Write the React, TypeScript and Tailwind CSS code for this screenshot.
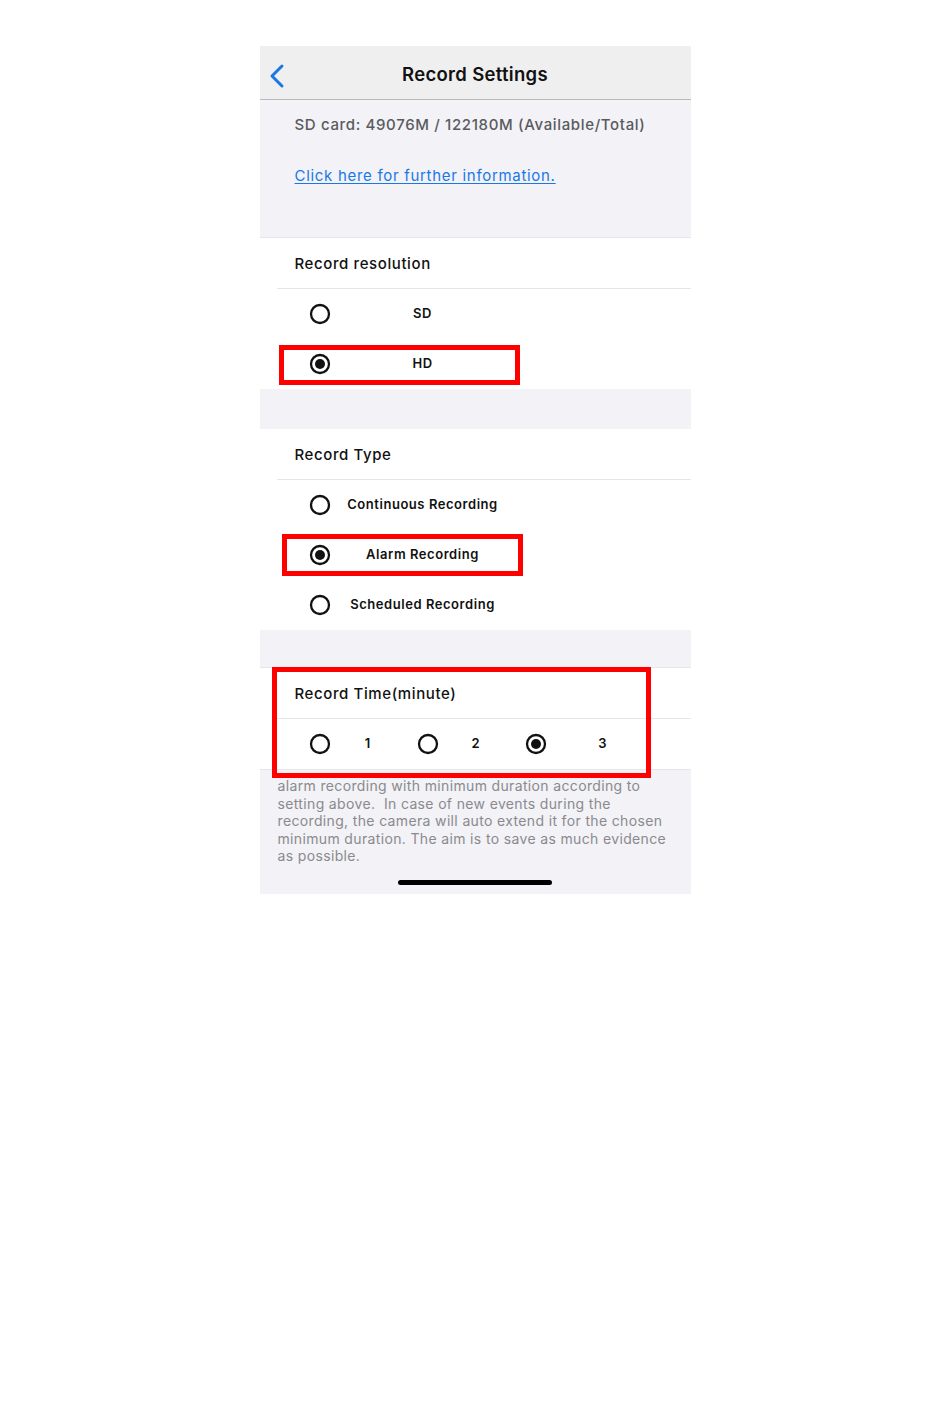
import React from "react";

function Radio({ on }: { on?: boolean }) {
  return (
    <svg width="22" height="22" viewBox="0 0 22 22" className="shrink-0">
      <circle cx="11" cy="11" r="9" fill="none" stroke="#111" strokeWidth="2.3" />
      {on && <circle cx="11" cy="11" r="5" fill="#111" />}
    </svg>
  );
}

function OptionRow({ label, on }: { label: string; on?: boolean }) {
  return (
    <div className="h-[50px] flex items-center">
      <div className="ml-[49px]">
        <Radio on={on} />
      </div>
      <div className="w-[184px] text-center text-[13px] font-semibold text-[#111] tracking-[0.55px]">
        {label}
      </div>
    </div>
  );
}

function Header({ title }: { title: string }) {
  return (
    <div className="h-[50px] flex items-center pt-[2px]">
      <span className="pl-[35px] text-[15px] font-medium text-[#111] tracking-[0.6px]">{title}</span>
    </div>
  );
}

export default function App() {
  return (
    <div className="min-h-[1420px] bg-white" style={{ fontFamily: "Inter, 'Noto Sans', sans-serif" }}>
      <div className="pt-[46px]">
        <div className="relative mx-auto w-[431px] bg-[#f2f2f7]">
          {/* Nav bar */}
          <div className="relative h-[54px] bg-[#efeff0] border-b border-[#b9b9bc] flex items-center justify-center pt-[5px]">
            <svg
              className="absolute left-[9px] top-[17px]"
              width="18"
              height="26"
              viewBox="0 0 18 26"
            >
              <path d="M13 3 L3 13 L13 23" fill="none" stroke="#1a78e6" strokeWidth="3" strokeLinecap="round" strokeLinejoin="round" />
            </svg>
            <span className="text-[18.5px] font-semibold text-[#111] tracking-[0.3px]">Record Settings</span>
          </div>

          {/* Info */}
          <div className="h-[138px] pl-[35px] pt-[15px] border-b border-[#e6e6ea]">
            <div className="text-[15px] leading-[20px] font-medium text-[#5a5a5e] tracking-[0.65px]">
              SD card: 49076M / 122180M (Available/Total)
            </div>
            <div className="mt-[31px] text-[15px] leading-[20px] text-[#1a78e6] underline underline-offset-2 tracking-[0.7px]">
              Click here for further information.
            </div>
          </div>

          {/* Record resolution */}
          <div className="bg-white">
            <Header title="Record resolution" />
            <div className="ml-[17px] border-t border-[#e6e6ea]" />
            <OptionRow label="SD" />
            <OptionRow label="HD" on />
          </div>

          <div className="h-[40px]" />

          {/* Record Type */}
          <div className="bg-white">
            <Header title="Record Type" />
            <div className="ml-[17px] border-t border-[#e6e6ea]" />
            <OptionRow label="Continuous Recording" />
            <OptionRow label="Alarm Recording" on />
            <OptionRow label="Scheduled Recording" />
          </div>

          <div className="h-[38px] border-b border-[#e6e6ea]" />

          {/* Record Time */}
          <div className="bg-white border-b border-[#e6e6ea]">
            <Header title="Record Time(minute)" />
            <div className="ml-[17px] border-t border-[#e6e6ea]" />
            <div className="h-[50px] flex items-center text-[13px] font-semibold text-[#111]">
              <div className="ml-[49px]">
                <Radio />
              </div>
              <div className="w-[74px] text-center">1</div>
              <div className="ml-[12px]">
                <Radio />
              </div>
              <div className="w-[74px] text-center">2</div>
              <div className="ml-[12px]">
                <Radio on />
              </div>
              <div className="w-[112px] text-center">3</div>
            </div>
          </div>

          {/* Footer text */}
          <div className="pt-[7px] px-[18px] text-[14px] leading-[17.5px] text-[#8a8a8e] tracking-[0.35px] whitespace-pre">
            {"alarm recording with minimum duration according to\nsetting above.  In case of new events during the\nrecording, the camera will auto extend it for the chosen\nminimum duration. The aim is to save as much evidence\nas possible."}
          </div>
          <div className="pt-[15px] pb-[9px] flex justify-center">
            <div className="w-[154px] h-[5px] rounded-full bg-black" />
          </div>

          {/* Red highlight boxes */}
          <div className="absolute left-[19px] top-[299px] w-[241px] h-[40px] border-[5px] border-[#ff0000]" />
          <div className="absolute left-[22px] top-[488px] w-[241px] h-[42px] border-[5px] border-[#ff0000]" />
          <div className="absolute left-[12px] top-[621px] w-[379px] h-[111px] border-[5px] border-[#ff0000]" />
        </div>
      </div>
    </div>
  );
}
